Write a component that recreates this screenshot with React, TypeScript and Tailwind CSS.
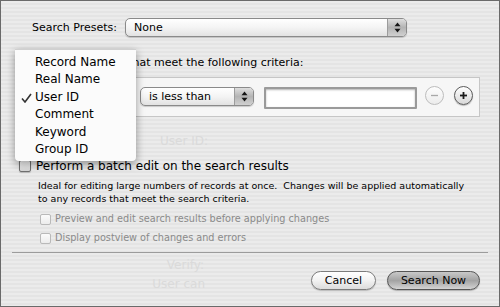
import React from 'react';

function Arrows() {
  return (
    <svg width="7" height="11" viewBox="0 0 7 11">
      <path d="M3.5 0.5 L6.5 4.2 L0.5 4.2 Z" fill="#151515" />
      <path d="M0.5 6.8 L6.5 6.8 L3.5 10.5 Z" fill="#151515" />
    </svg>
  );
}

function PopUp({ label, className }: { label: string; className: string }) {
  return (
    <div
      className={`flex h-[19px] shrink-0 items-stretch overflow-hidden rounded-[5px] border border-[#8a8a8a] bg-gradient-to-b from-white via-[#f4f4f4] to-[#e2e2e2] shadow-[0_1px_1px_rgba(0,0,0,0.18)] ${className}`}
    >
      <span className="flex-1 truncate pl-[8px] text-[11px] leading-[17px] text-black">{label}</span>
      <span className="flex w-[19px] items-center justify-center border-l border-[#9c9c9c] bg-gradient-to-b from-[#dedede] via-[#b4b4b4] to-[#d0d0d0]">
        <Arrows />
      </span>
    </div>
  );
}

function CheckBox({ disabled }: { disabled?: boolean }) {
  return (
    <span
      className={
        disabled
          ? 'block h-[11px] w-[11px] shrink-0 rounded-[2px] border border-[#b9b9b9] bg-gradient-to-b from-[#fbfbfb] to-[#ececec]'
          : 'block h-[12px] w-[12px] shrink-0 rounded-[2px] border border-[#707070] bg-gradient-to-b from-white to-[#d6d6d6] shadow-[0_1px_1px_rgba(0,0,0,0.2)]'
      }
    />
  );
}

function RoundButton({ kind }: { kind: 'plus' | 'minus' }) {
  const on = kind === 'plus';
  return (
    <span
      className={
        on
          ? 'flex h-[19px] w-[19px] shrink-0 items-center justify-center rounded-full border-[1.5px] border-[#5a5a5a] bg-gradient-to-b from-white to-[#d8d8d8] shadow-[0_1px_1px_rgba(0,0,0,0.25)]'
          : 'flex h-[19px] w-[19px] shrink-0 items-center justify-center rounded-full border border-[#bdbdbd] bg-gradient-to-b from-[#fdfdfd] to-[#ececec]'
      }
    >
      <svg width="11" height="11" viewBox="0 0 11 11">
        <path d="M2 5.5 H9" stroke={on ? '#1a1a1a' : '#a8a8a8'} strokeWidth={on ? 1.8 : 1.3} />
        {on && <path d="M5.5 2 V9" stroke="#1a1a1a" strokeWidth="1.8" />}
      </svg>
    </span>
  );
}

const menuItems = ['Record Name', 'Real Name', 'User ID', 'Comment', 'Keyword', 'Group ID'];

export default function App() {
  return (
    <div className="relative h-[307px] w-[500px] overflow-hidden border border-[#6a6a6a] bg-[repeating-linear-gradient(180deg,#ebebeb_0px,#ebebeb_2px,#e4e4e4_2px,#e4e4e4_4px)] font-['DejaVu_Sans',sans-serif] text-black">
      {/* presets */}
      <div className="flex items-center gap-[8px] pl-[31px] pt-[17px]">
        <span className="text-[11px] leading-[19px]">Search Presets:</span>
        <PopUp label="None" className="w-[282px]" />
      </div>

      <p className="mt-[19px] pl-[23px] text-[11px] leading-[14px]">
        Search for records that meet the following criteria:
      </p>

      {/* criteria */}
      <div className="ml-[19px] mt-[7px] flex h-[40px] w-[460px] items-start border border-[#c6c6c6] bg-[#f6f6f6] pl-[9px] pt-[9px]">
        <PopUp label="User ID" className="w-[101px]" />
        <PopUp label="is less than" className="ml-[9px] w-[114px]" />
        <div className="ml-[10px] h-[22px] w-[153px] shrink-0 rounded-[1px] border-2 border-[#9a9a9a] bg-white shadow-[inset_0_1px_2px_rgba(0,0,0,0.3)]" />
        <div className="-mt-px ml-[8px] flex items-center gap-[10px]">
          <RoundButton kind="minus" />
          <RoundButton kind="plus" />
        </div>
      </div>

      {/* ghost of the window behind */}
      <div className="h-[42px] pl-[159px] pt-[17px] text-[12px] leading-[14px] text-[#dadada]">User ID:</div>

      <label className="flex items-center gap-[5px] pl-[18px]">
        <CheckBox />
        <span className="text-[12px] leading-[14px]">Perform a batch edit on the search results</span>
      </label>

      <p className="mt-[6px] pl-[37px] text-[9.5px] leading-[13px]">
        Ideal for editing large numbers of records at once.{'\u00a0'} Changes will be applied automatically
        <br />
        to any records that meet the search criteria.
      </p>

      <div className="mt-[7px] flex flex-col gap-[5px] pl-[39px] text-[9.7px] leading-[14px] text-[#8a8a8a]">
        <label className="flex items-center gap-[4px]">
          <CheckBox disabled />
          <span>Preview and edit search results before applying changes</span>
        </label>
        <label className="flex items-center gap-[4px]">
          <CheckBox disabled />
          <span>Display postview of changes and errors</span>
        </label>
      </div>

      <div className="ml-[11px] mt-[7px] h-px w-[476px] bg-[#9c9c9c]" />

      <div className="flex pr-[19px] pt-[5px]">
        <div className="flex w-[204px] flex-col items-end gap-[5px] text-[12px] leading-[14px] text-[#dadada]">
          <span className="pr-px">Verify:</span>
          <span>User can</span>
        </div>
        <div className="ml-auto mt-[13px] flex gap-[11px]">
          <button className="h-[19px] w-[65px] rounded-full border border-[#7c7c7c] bg-gradient-to-b from-white via-[#f2f2f2] to-[#dcdcdc] text-[11px] leading-[17px] shadow-[0_1px_1px_rgba(0,0,0,0.2)]">
            Cancel
          </button>
          <button className="h-[19px] w-[93px] rounded-full border border-[#555] bg-gradient-to-b from-[#c9c9c9] via-[#a3a3a3] to-[#d4d4d4] text-[11px] leading-[17px] shadow-[0_1px_1px_rgba(0,0,0,0.25)]">
            Search Now
          </button>
        </div>
      </div>

      {/* open pop-up menu */}
      <div className="absolute left-[14px] top-[48px] h-[112px] w-[121px] rounded-b-[4px] border-t border-[#d0d0d0] bg-[#fbfbfb] pt-[4px] shadow-[0_3px_8px_rgba(0,0,0,0.4)]">
        {menuItems.map((item) => (
          <div key={item} className="relative h-[17.4px] pl-[20px] text-[12px] leading-[17.4px]">
            {item === 'User ID' && (
              <svg className="absolute left-[6px] top-[4px]" width="11" height="10" viewBox="0 0 11 10">
                <path d="M1 5.5 L4 9 L10 1" fill="none" stroke="#333" strokeWidth="1.6" />
              </svg>
            )}
            {item}
          </div>
        ))}
      </div>
    </div>
  );
}
